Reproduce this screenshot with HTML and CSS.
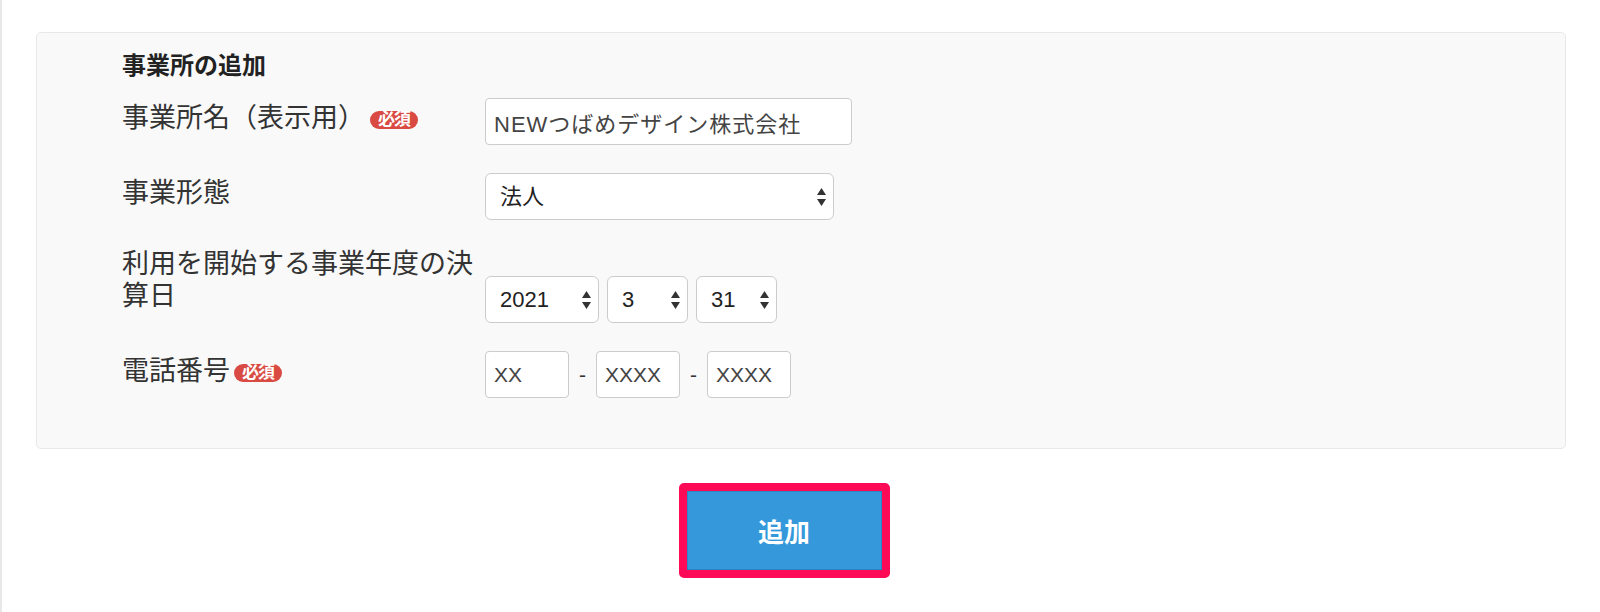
FILE: index.html
```html
<!DOCTYPE html>
<html lang="ja">
<head>
<meta charset="utf-8">
<title>事業所の追加</title>
<link rel="stylesheet" href="styles.css">
</head>
<body>
<div class="page">
  <section class="panel">
    <h2 class="panel-title">事業所の追加</h2>

    <div class="form-row first">
      <label class="form-label">事業所名（表示用）<span class="badge">必須</span></label>
      <div class="controls">
        <input class="text-input w-name" type="text" value="NEWつばめデザイン株式会社">
      </div>
    </div>

    <div class="form-row">
      <label class="form-label">事業形態</label>
      <div class="controls">
        <span class="select-wrap">
          <select class="select w-type"><option>法人</option></select>
          <svg class="arrows" width="9" height="18" viewBox="0 0 9 18"><path d="M4.5 0 L9 7 L0 7 Z M4.5 18 L9 11 L0 11 Z" fill="#333"/></svg>
        </span>
      </div>
    </div>

    <div class="form-row">
      <label class="form-label">利用を開始する事業年度の決算日</label>
      <div class="controls">
        <span class="select-wrap">
          <select class="select w-year"><option>2021</option></select>
          <svg class="arrows" width="9" height="18" viewBox="0 0 9 18"><path d="M4.5 0 L9 7 L0 7 Z M4.5 18 L9 11 L0 11 Z" fill="#333"/></svg>
        </span>
        <span class="select-wrap">
          <select class="select w-day"><option>3</option></select>
          <svg class="arrows" width="9" height="18" viewBox="0 0 9 18"><path d="M4.5 0 L9 7 L0 7 Z M4.5 18 L9 11 L0 11 Z" fill="#333"/></svg>
        </span>
        <span class="select-wrap">
          <select class="select w-day"><option>31</option></select>
          <svg class="arrows" width="9" height="18" viewBox="0 0 9 18"><path d="M4.5 0 L9 7 L0 7 Z M4.5 18 L9 11 L0 11 Z" fill="#333"/></svg>
        </span>
      </div>
    </div>

    <div class="form-row">
      <label class="form-label">電話番号<span class="badge tight">必須</span></label>
      <div class="controls tel">
        <input class="text-input w-tel" type="text" value="XX">
        <span class="dash">-</span>
        <input class="text-input w-tel" type="text" value="XXXX">
        <span class="dash">-</span>
        <input class="text-input w-tel" type="text" value="XXXX">
      </div>
    </div>
  </section>

  <div class="actions">
    <div class="highlight">
      <button class="btn-primary" type="button">追加</button>
    </div>
  </div>
</div>
</body>
</html>
```

FILE: styles.css
```css
* { box-sizing: border-box; }

html, body {
  margin: 0;
  padding: 0;
  background: #ffffff;
}

body {
  border-left: 2px solid #e8e8e8;
  min-height: 612px;
  font-family: "Liberation Sans", "Noto Sans CJK JP", sans-serif;
  color: #333333;
}

.page {
  padding: 32px 34px 0 34px;
}

.panel {
  background: #f9f9f9;
  border: 1px solid #e9e9e9;
  border-radius: 5px;
  padding: 17px 20px 50px 85px;
}

.panel-title {
  margin: 0;
  font-size: 24px;
  line-height: 32px;
  font-weight: bold;
  color: #222222;
}

.form-row {
  display: flex;
  align-items: flex-end;
  margin-top: 28px;
}

.form-row.first {
  margin-top: 16px;
}

.form-label {
  flex: none;
  width: 363px;
  padding-bottom: 11px;
  font-size: 27px;
  line-height: 32px;
  color: #333333;
}

.badge {
  display: inline-block;
  vertical-align: middle;
  margin-left: 5px;
  height: 18px;
  padding: 0 8px;
  border-radius: 9px;
  background: #d84a42;
  color: #ffffff;
  font-size: 17px;
  line-height: 18px;
  font-weight: bold;
  letter-spacing: -1px;
}

.badge.tight {
  margin-left: 4px;
}

.controls {
  display: flex;
  align-items: center;
  gap: 8px;
}

.controls.tel {
  gap: 0;
}

.text-input {
  height: 47px;
  border: 1px solid #cccccc;
  border-radius: 4px;
  background: #ffffff;
  padding: 0 8px;
  font-family: "Liberation Sans", "Noto Sans CJK JP", sans-serif;
  font-size: 21px;
  color: #444444;
  outline: none;
}

.w-name { width: 367px; font-size: 22px; letter-spacing: 1px; }
.w-tel { width: 84px; }

.dash {
  margin: 0 10px;
  font-size: 21px;
  color: #333333;
}

.select-wrap {
  position: relative;
  display: inline-block;
}

.select {
  appearance: none;
  -webkit-appearance: none;
  height: 47px;
  border: 1px solid #cccccc;
  border-radius: 6px;
  background: #ffffff;
  padding: 0 26px 0 14px;
  font-family: "Liberation Sans", "Noto Sans CJK JP", sans-serif;
  font-size: 22px;
  color: #222222;
  outline: none;
}

.w-type { width: 349px; }
.w-year { width: 114px; }
.w-day { width: 81px; }

.arrows {
  position: absolute;
  right: 8px;
  top: 50%;
  margin-top: -9px;
  pointer-events: none;
}

.actions {
  display: flex;
  justify-content: center;
  padding-right: 34px;
  margin-top: 34px;
}

.highlight {
  border: 8px solid #ff0a56;
  border-radius: 5px;
}

.btn-primary {
  display: block;
  width: 195px;
  height: 79px;
  border: 1px solid #2a86c6;
  background: #3498db;
  color: #ffffff;
  font-family: "Liberation Sans", "Noto Sans CJK JP", sans-serif;
  font-size: 26px;
  font-weight: bold;
  cursor: pointer;
}
```
